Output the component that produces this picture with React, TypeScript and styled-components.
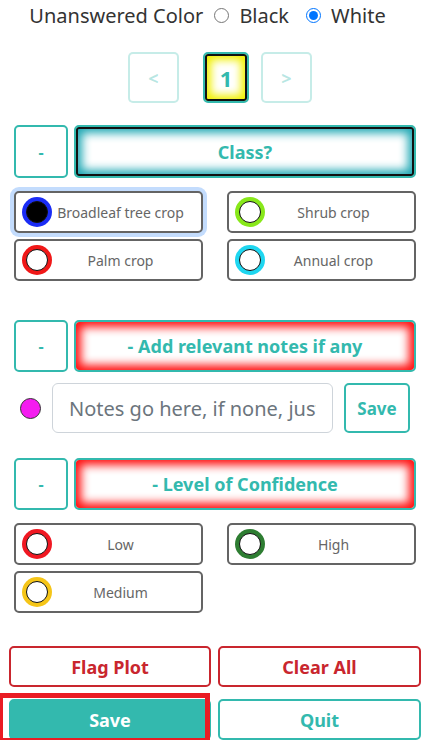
import React from "react";
import styled, { createGlobalStyle, css } from "styled-components";

const teal = "#33b9ae";
const red = "#c9262e";

const GlobalStyle = createGlobalStyle`
  html, body { margin: 0; padding: 0; background: #fff; }
  body { font-family: "Noto Sans", "Open Sans", sans-serif; color: #333; }
  *, *::before, *::after { box-sizing: border-box; }
`;

const Page = styled.div`
  width: 435px;
  display: flex;
  flex-direction: column;
`;

const ColorBar = styled.div`
  height: 30px;
  display: flex;
  align-items: center;
  justify-content: center;
  font-size: 20px;
  color: #333;
  padding-right: 20px;
`;

const RadioLabel = styled.label<{ $gapAfter?: number }>`
  display: inline-flex;
  align-items: center;
  gap: 10px;
  margin-left: ${(p) => p.$gapAfter ?? 11}px;
  input {
    width: 15px;
    height: 15px;
    margin: 0;
  }
`;

const Pager = styled.div`
  margin-top: 22px;
  display: flex;
  justify-content: flex-start;
  padding-left: 128px;
`;

const PageButton = styled.button<{ $active?: boolean }>`
  width: ${(p) => (p.$active ? 46 : 51)}px;
  height: 51px;
  border-radius: 5px;
  background: #fff;
  font-family: inherit;
  font-weight: 700;
  font-size: 18px;
  padding: 0;
  ${(p) =>
    p.$active
      ? css`
          margin: 0 12px 0 24px;
          border: 2px solid ${teal};
          color: ${teal};
          font-size: 22px;
          box-shadow: inset 0 0 0 2px #111, inset 0 0 8px 6px #f0f000;
        `
      : css`
          border: 2px solid rgba(51, 185, 174, 0.28);
          color: rgba(51, 185, 174, 0.35);
        `}
`;

const Section = styled.section<{ $top: number }>`
  margin-top: ${(p) => p.$top}px;
  padding: 0 19px 0 14px;
  display: flex;
  flex-direction: column;
`;

const HeaderRow = styled.div<{ $h: number }>`
  display: grid;
  grid-template-columns: 54px 1fr;
  gap: 6px;
  height: ${(p) => p.$h}px;
`;

const CollapseButton = styled.button`
  border: 2px solid ${teal};
  border-radius: 5px;
  background: #fff;
  color: ${teal};
  font-family: inherit;
  font-size: 16px;
  font-weight: 700;
`;

const HeaderButton = styled.button<{ $glow: "teal" | "red" }>`
  border: 2px solid ${teal};
  border-radius: 5px;
  background: #fff;
  color: ${teal};
  font-family: inherit;
  font-size: 18px;
  font-weight: 700;
  box-shadow: ${(p) =>
    p.$glow === "teal"
      ? "inset 0 0 0 2px #111, inset 0 0 10px 6px #1fa8b4"
      : "inset 0 0 10px 5px #ff1010"};
`;

const OptionGrid = styled.div`
  margin-top: 13px;
  display: grid;
  grid-template-columns: 1fr 1fr;
  grid-auto-rows: 42px;
  column-gap: 24px;
  row-gap: 6px;
`;

const Option = styled.button<{ $focused?: boolean }>`
  height: 42px;
  border: 2px solid #646464;
  border-radius: 5px;
  background: #fff;
  display: flex;
  align-items: center;
  padding: 0 12px 0 6px;
  font-family: inherit;
  font-size: 14px;
  color: #666;
  ${(p) => p.$focused && css`box-shadow: 0 0 0 4px #c3dcfd;`}
`;

const Dot = styled.span<{ $ring: string; $fill: string }>`
  flex: none;
  width: 30px;
  height: 30px;
  border-radius: 50%;
  background: ${(p) => p.$ring};
  display: flex;
  align-items: center;
  justify-content: center;
  &::after {
    content: "";
    width: 22px;
    height: 22px;
    border-radius: 50%;
    border: 1.5px solid #111;
    background: ${(p) => p.$fill};
  }
`;

const OptionText = styled.span`
  flex: 1;
  text-align: center;
  white-space: nowrap;
`;

const NotesRow = styled.div`
  margin-top: 11px;
  height: 50px;
  display: flex;
  align-items: center;
  padding-left: 20px;
`;

const NoteDot = styled.span`
  width: 21px;
  height: 21px;
  border-radius: 50%;
  background: #f41cf0;
  border: 1px solid #333;
  margin-right: 11px;
`;

const NotesInput = styled.input`
  width: 281px;
  height: 50px;
  border: 1px solid #ced4da;
  border-radius: 6px;
  padding: 0 16px;
  font-family: inherit;
  font-size: 20px;
  color: #333;
  &::placeholder { color: #6c757d; }
`;

const SaveNote = styled.button`
  margin-left: 11px;
  width: 66px;
  height: 50px;
  border: 2px solid ${teal};
  border-radius: 5px;
  background: #fff;
  color: ${teal};
  font-family: inherit;
  font-size: 17px;
  font-weight: 700;
  padding: 0;
`;

const Footer = styled.div`
  margin-top: 33px;
  padding: 0 14px 0 9px;
  display: grid;
  grid-template-columns: 202px 203px;
  grid-auto-rows: 41px;
  column-gap: 7px;
  row-gap: 12px;
`;

const Highlight = styled.div`
  position: relative;
  display: flex;
  &::after {
    content: "";
    position: absolute;
    left: -11px;
    top: -6px;
    width: 212px;
    height: 50px;
    border: 5px solid #e91c24;
    pointer-events: none;
  }
`;

const ActionButton = styled.button<{ $kind: "danger" | "primary" | "outline" }>`
  flex: 1;
  height: 41px;
  border-radius: 5px;
  font-family: inherit;
  font-size: 18px;
  font-weight: 700;
  ${(p) =>
    p.$kind === "danger"
      ? css`
          border: 2px solid ${red};
          background: #fff;
          color: ${red};
        `
      : p.$kind === "primary"
      ? css`
          border: 2px solid ${teal};
          background: ${teal};
          color: #fff;
        `
      : css`
          border: 2px solid ${teal};
          background: #fff;
          color: ${teal};
        `}
`;

const classOptions = [
  { label: "Broadleaf tree crop", ring: "#1a2cf5", fill: "#000", focused: true },
  { label: "Shrub crop", ring: "#88e81a", fill: "#fff" },
  { label: "Palm crop", ring: "#f01818", fill: "#fff" },
  { label: "Annual crop", ring: "#1ed6f0", fill: "#fff" },
];

const confidenceOptions = [
  { label: "Low", ring: "#f01822", fill: "#fff" },
  { label: "High", ring: "#2e7d32", fill: "#fff" },
  { label: "Medium", ring: "#f5c518", fill: "#fff" },
];

type Opt = { label: string; ring: string; fill: string; focused?: boolean };

const Options = ({ items }: { items: Opt[] }) => (
  <OptionGrid>
    {items.map((o) => (
      <Option key={o.label} $focused={o.focused}>
        <Dot $ring={o.ring} $fill={o.fill} />
        <OptionText>{o.label}</OptionText>
      </Option>
    ))}
  </OptionGrid>
);

export default function App() {
  return (
    <Page>
      <GlobalStyle />
      <ColorBar>
        <span>Unanswered Color</span>
        <RadioLabel>
          <input type="radio" name="uc" /> Black
        </RadioLabel>
        <RadioLabel $gapAfter={17}>
          <input type="radio" name="uc" defaultChecked /> White
        </RadioLabel>
      </ColorBar>
      <Pager>
        <PageButton>&lt;</PageButton>
        <PageButton $active>1</PageButton>
        <PageButton>&gt;</PageButton>
      </Pager>

      <Section $top={22}>
        <HeaderRow $h={53}>
          <CollapseButton>-</CollapseButton>
          <HeaderButton $glow="teal">Class?</HeaderButton>
        </HeaderRow>
        <Options items={classOptions} />
      </Section>

      <Section $top={39}>
        <HeaderRow $h={52}>
          <CollapseButton>-</CollapseButton>
          <HeaderButton $glow="red">- Add relevant notes if any</HeaderButton>
        </HeaderRow>
      </Section>
      <NotesRow>
        <NoteDot />
        <NotesInput placeholder="Notes go here, if none, just leave blank" />
        <SaveNote>Save</SaveNote>
      </NotesRow>

      <Section $top={25}>
        <HeaderRow $h={52}>
          <CollapseButton>-</CollapseButton>
          <HeaderButton $glow="red">- Level of Confidence</HeaderButton>
        </HeaderRow>
        <Options items={confidenceOptions} />
      </Section>

      <Footer>
        <ActionButton $kind="danger">Flag Plot</ActionButton>
        <ActionButton $kind="danger">Clear All</ActionButton>
        <Highlight>
          <ActionButton $kind="primary">Save</ActionButton>
        </Highlight>
        <ActionButton $kind="outline">Quit</ActionButton>
      </Footer>
    </Page>
  );
}
